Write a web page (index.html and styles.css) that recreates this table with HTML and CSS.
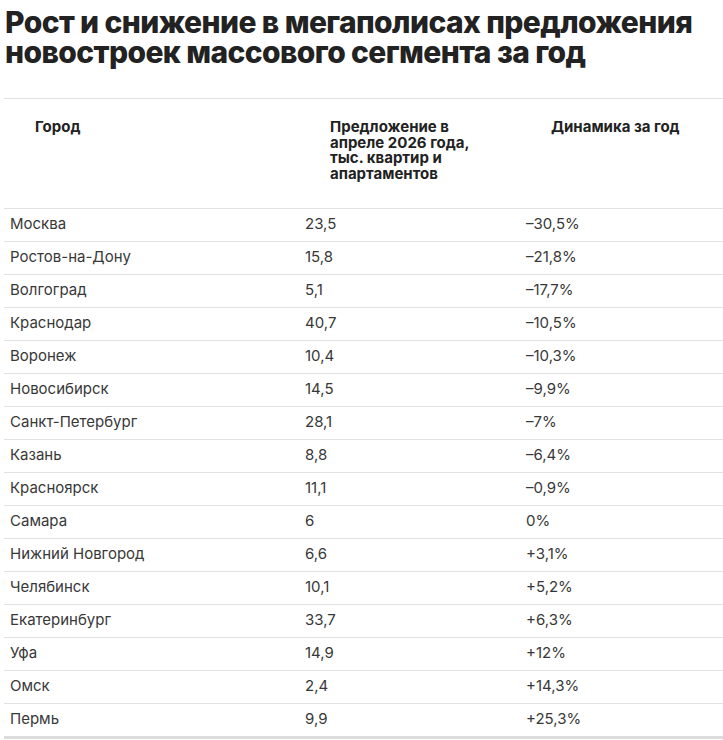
FILE: index.html
```html
<!DOCTYPE html>
<html lang="ru">
<head>
<meta charset="utf-8">
<title>Рост и снижение предложения новостроек</title>
<link rel="stylesheet" href="styles.css">
</head>
<body>
<h1 class="title">Рост и снижение в мегаполисах предложения новостроек массового сегмента за год</h1>
<table class="data">
  <colgroup>
    <col class="c1"><col class="c2"><col class="c3">
  </colgroup>
  <thead>
    <tr>
      <th>Город</th>
      <th>Предложение в апреле 2026 года, тыс. квартир и апартаментов</th>
      <th>Динамика за год</th>
    </tr>
  </thead>
  <tbody>
    <tr><td>Москва</td><td>23,5</td><td>–30,5%</td></tr>
    <tr><td>Ростов-на-Дону</td><td>15,8</td><td>–21,8%</td></tr>
    <tr><td>Волгоград</td><td>5,1</td><td>–17,7%</td></tr>
    <tr><td>Краснодар</td><td>40,7</td><td>–10,5%</td></tr>
    <tr><td>Воронеж</td><td>10,4</td><td>–10,3%</td></tr>
    <tr><td>Новосибирск</td><td>14,5</td><td>–9,9%</td></tr>
    <tr><td>Санкт-Петербург</td><td>28,1</td><td>–7%</td></tr>
    <tr><td>Казань</td><td>8,8</td><td>–6,4%</td></tr>
    <tr><td>Красноярск</td><td>11,1</td><td>–0,9%</td></tr>
    <tr><td>Самара</td><td>6</td><td>0%</td></tr>
    <tr><td>Нижний Новгород</td><td>6,6</td><td>+3,1%</td></tr>
    <tr><td>Челябинск</td><td>10,1</td><td>+5,2%</td></tr>
    <tr><td>Екатеринбург</td><td>33,7</td><td>+6,3%</td></tr>
    <tr><td>Уфа</td><td>14,9</td><td>+12%</td></tr>
    <tr><td>Омск</td><td>2,4</td><td>+14,3%</td></tr>
    <tr class="last"><td>Пермь</td><td>9,9</td><td>+25,3%</td></tr>
  </tbody>
</table>
</body>
</html>
```
FILE: styles.css
```css
html, body {
  margin: 0;
  padding: 0;
  background: #ffffff;
}
body {
  font-family: Inter, "Noto Sans", sans-serif;
  color: #333333;
  width: 723px;
  overflow: hidden;
}
.title {
  margin: 7px 0 0 0;
  padding: 0 0 0 5px;
  font-size: 30px;
  line-height: 30px;
  font-weight: 800;
  color: #222222;
  letter-spacing: -0.6px;
}
.data {
  margin: 31px 0 0 4px;
  width: 719px;
  table-layout: fixed;
  border-collapse: collapse;
  border-spacing: 0;
}
.c1 { width: 295px; }
.c2 { width: 221px; }
.c3 { width: 203px; }
.data th {
  text-align: left;
  vertical-align: top;
  font-size: 15px;
  line-height: 15.7px;
  font-weight: 700;
  color: #222222;
  padding: 20px 40px 26px 31px;
  border-top: 1px solid #e2e2e2;
}
.data td {
  font-size: 15px;
  line-height: 20px;
  font-weight: 400;
  color: #383838;
  padding: 5px 6px 7px 6px;
  border-top: 1px solid #e2e2e2;
  white-space: nowrap;
}
.data tr.last td {
  border-bottom: 3px solid #dcdcdc;
}
```
